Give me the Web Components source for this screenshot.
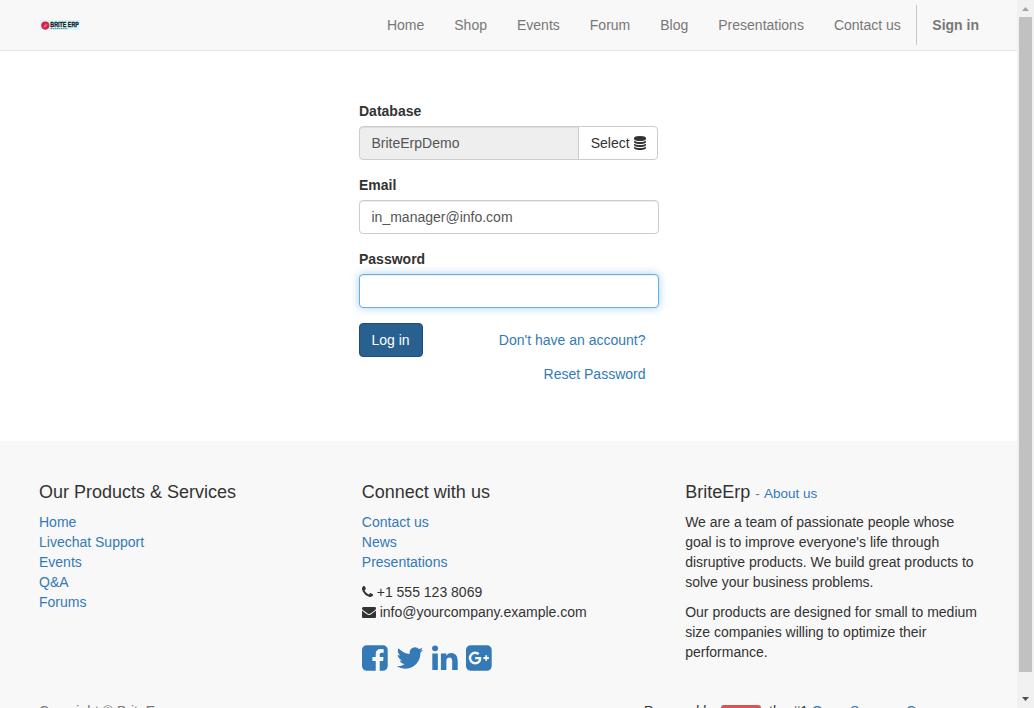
<!DOCTYPE html>
<html lang="en">
<head>
<meta charset="utf-8">
<title>Login | BriteErp</title>
<style>
html,body{margin:0;height:100%;overflow:hidden;background:#fff}
body{font:14px/20px "Liberation Sans",Arial,sans-serif;color:#333}
</style>
</head>
<body>
<erp-page>
  <erp-navbar slot="header">
    <erp-nav-item>Home</erp-nav-item><erp-nav-item>Shop</erp-nav-item><erp-nav-item>Events</erp-nav-item><erp-nav-item>Forum</erp-nav-item><erp-nav-item>Blog</erp-nav-item><erp-nav-item>Presentations</erp-nav-item><erp-nav-item>Contact us</erp-nav-item><erp-nav-item strong>Sign in</erp-nav-item>
  </erp-navbar>
  <erp-login></erp-login>
  <erp-footer slot="footer"></erp-footer>
</erp-page>
<script>
const define = (name, html) => customElements.define(name, class extends HTMLElement {
  constructor() {
    super();
    const t = document.createElement('template');
    t.innerHTML = html;
    this.attachShadow({mode: 'open'}).append(t.content.cloneNode(true));
  }
});

/* Glyphs on a 1792 grid: [left, advance, path] */
const GLYPHS = {
  facebook: [128,1536,'M1376 128q119 0 203.500 84.500t84.500 203.500v960q0 119-84.500 203.500t-203.500 84.500h-188v-595h199l30-232h-229v-148q0-56 23.500-84t91.500-28l122-1v-207q-63-9-178-9-136 0-217.500 80t-81.500 226v171h-200v232h200v595h-532q-119 0-203.500-84.500t-84.500-203.500v-960q0-119 84.500-203.500t203.500-84.500h960z'],
  twitter: [64,1664,'M1684 408q-67 98-162 167 1 14 1 42 0 130-38 259.500t-115.500 248.500-184.500 210.500-258 146-323 54.500q-271 0-496-145 35 4 78 4 225 0 401-138-105-2-188-64.500t-114-159.500q33 5 61 5 43 0 85-11-112-23-185.500-111.500t-73.500-205.500v-4q68 38 146 41-66-44-105-115t-39-154q0-88 44-163 121 149 294.500 238.500t371.500 99.500q-8-38-8-74 0-134 94.500-228.500t228.500-94.500q140 0 236 102 109-21 205-78-37 115-142 178 93-10 186-50z'],
  linkedin: [128,1536,'M477 625v991h-330v-991h330zm21-306q1 73-50.500 122t-135.500 49h-2q-82 0-132-49t-50-122q0-74 51.500-122.500t134.500-48.500 133 48.500 51 122.500zm1166 729v568h-329v-530q0-105-40.500-164.500t-126.500-59.500q-63 0-105.500 34.500t-63.500 85.500q-11 30-11 81v553h-329q2-399 2-647t-1-296l-1-48h329v144h-2q20-32 41-56t56.500-52 87-43.500 114.500-15.500q171 0 275 113.500t104 332.500z'],
  google: [128,1536,'M1045 905q0-26-6-64h-362v132h217q-3 24-16.500 50t-37.500 53-66.500 44.500-96.500 17.500q-99 0-169-71t-70-171 70-171 169-71q92 0 153 59l104-101q-108-100-257-100-160 0-272 112.500t-112 271.500 112 271.500 272 112.500q165 0 266.500-105t101.500-270zm345 46h109v-110h-109v-110h-110v110h-110v110h110v110h110v-110zm274-535v960q0 119-84.500 203.500t-203.500 84.500h-960q-119 0-203.500-84.500t-84.500-203.500v-960q0-119 84.500-203.500t203.500-84.500h960q119 0 203.500 84.500t84.500 203.500z'],
  phone: [192,1408,'M1600 1240q0 27-10 70.500t-21 68.500q-21 50-122 106-94 51-186 51-27 0-52.500-3.500t-57.500-12.500-47.500-14.500-55.500-20.500-49-18q-98-35-175-83-128-79-264.500-215.500t-215.500-264.500q-48-77-83-175-3-9-18-49t-20.500-55.500-14.500-47.500-12.500-57.500-3.500-52.500q0-92 51-186 56-101 106-122 25-11 68.500-21t70.500-10q14 0 21 3 18 6 53 76 11 19 30 54t35 63.500 31 53.500q3 4 17.500 25t21.500 35.500 7 28.500q0 20-28.500 50t-62 55-62 53-28.500 46q0 9 5 22.500t8.500 20.500 14 24 11.500 19q76 137 174 235t235 174q2 1 19 11.500t24 14 20.500 8.500 22.500 5q18 0 46-28.500t53-62 55-62 50-28.500q14 0 28.500 7t35.500 21.500 25 17.500q25 15 53.500 31t63.500 35 54 30q70 35 76 53 3 7 3 21z'],
  envelope: [0,1792,'M1792 710v794q0 66-47 113t-113 47h-1472q-66 0-113-47t-47-113v-794q44 49 101 87 362 246 497 345 57 42 92.500 65.500t94.500 48 110 24.500h2q51 0 110-24.500t94.500-48 92.500-65.500q170-123 498-345 57-39 100-87zm0-294q0 79-49 151t-122 123q-376 261-468 325-10 7-42.500 30.500t-54 38-52 32.500-57.500 27-50 9h-2q-23 0-50-9t-57.500-27-52-32.500-54-38-42.500-30.500q-91-64-262-182.500t-205-142.500q-62-42-117-115.500t-55-136.500q0-78 41.500-130t118.500-52h1472q65 0 112.500 47t47.500 113z'],
  database: [128,1536,'M896 768q237 0 443-43t325-127v170q0 69-103 128t-280 93.500-385 34.500-385-34.500-280-93.500-103-128v-170q119 84 325 127t443 43zm0 768q237 0 443-43t325-127v170q0 69-103 128t-280 93.500-385 34.500-385-34.500-280-93.500-103-128v-170q119 84 325 127t443 43zm0-384q237 0 443-43t325-127v170q0 69-103 128t-280 93.500-385 34.500-385-34.500-280-93.500-103-128v-170q119 84 325 127t443 43zm0-1152q208 0 385 34.500t280 93.500 103 128v128q0 69-103 128t-280 93.500-385 34.500-385-34.500-280-93.500-103-128v-128q0-69 103-128t280-93.500 385-34.500z']
};
customElements.define('erp-icon', class extends HTMLElement {
  connectedCallback() {
    if (this.shadowRoot) return;
    const [x, w, d] = GLYPHS[this.getAttribute('name')];
    this.attachShadow({mode: 'open'}).innerHTML =
      `<style>:host{display:inline-block;height:1em;width:${w / 1792}em;vertical-align:-2px}svg{display:block;width:100%;height:100%;fill:currentColor;overflow:visible}</style>
       <svg viewBox="${x} 0 ${w} 1792" aria-hidden="true"><path d="${d}"/></svg>`;
  }
});

define('erp-logo', `<style>:host{display:block;width:40px;height:10px}svg{display:block}text{font-family:"Liberation Sans",Arial,sans-serif;font-weight:bold}</style>
<svg width="40" height="10" viewBox="0 0 40 10"><rect width="39.500" height="10" fill="#d8f6f8"/><circle cx="5.300" cy="5.600" r="4.100" fill="#dc1e46"/><path d="M3.800 7.200l2.200-3.100M5 7.400l2-2.800" stroke="#f4a9ba" stroke-width=".7"/>
<text x="10.300" y="7" font-size="6.600" textLength="28.600" lengthAdjust="spacingAndGlyphs" fill="#14242c" stroke="#14242c" stroke-width=".3">BRITE ERP</text>
<path d="M10.500 8.600h17" stroke="#53666c" stroke-width=".8" stroke-dasharray="1.600 .5"/></svg>`);

define('erp-nav-item', `<style>:host{display:block;color:#777}span{display:block;padding:10px 15px;margin:5px 0}:host([strong]) span{font-weight:bold;border-left:1px solid #c8c8c8;padding:10px 14.500px 10px 15.500px}</style><span><slot></slot></span>`);

define('erp-navbar', `<style>:host{display:block;background:#f8f8f8;border-bottom:1px solid #e7e7e7}
.in{box-sizing:border-box;width:970px;height:50px;margin:0 auto;padding-left:16.500px;display:flex;align-items:center;justify-content:space-between}nav{display:flex}</style>
<div class="in"><erp-logo></erp-logo><nav><slot></slot></nav></div>`);

define('erp-field', `<style>:host{display:block;margin-bottom:15px}b{display:block;margin-bottom:5px;padding-left:.5px}
.row{display:flex}.box{flex:1;box-sizing:border-box;height:34px;padding:6px 12px;border:1px solid #ccc;border-radius:4px;background:#fff;color:#555;box-shadow:inset 0 1px 1px rgba(0,0,0,.075)}
:host([readonly]) .box{background:#eee;border-radius:4px 0 0 4px}
:host([focused]) .box{border-color:#66afe9;box-shadow:inset 0 1px 1px rgba(0,0,0,.075),0 0 8px rgba(102,175,233,.6)}
::slotted([slot=addon]){margin-left:-1px}</style>
<b><slot name="label"></slot></b><div class="row"><div class="box" role="textbox"><slot></slot></div><slot name="addon"></slot></div>`);

define('erp-button', `<style>:host{display:block;box-sizing:border-box;height:34px;padding:6px 12px;border:1px solid #ccc;border-radius:4px;background:#fff;white-space:nowrap}
:host([primary]){background:#286090;border-color:#204d74;color:#fff}
:host([link]){background:none;border-color:transparent;color:#337ab7}
:host([slot=addon]){border-radius:0 4px 4px 0;padding-right:11px}</style><slot></slot>`);

define('erp-login', `<style>:host{display:block;box-sizing:border-box;width:300px;height:390px;margin:0 auto;padding-top:50px}
erp-field[readonly]{margin-right:1px}.act{display:flex;justify-content:space-between;align-items:flex-start}.links{display:flex;flex-direction:column;align-items:flex-end}</style>
<erp-field readonly><span slot="label">Database</span>BriteErpDemo<erp-button slot="addon">Select <erp-icon name="database"></erp-icon></erp-button></erp-field>
<erp-field><span slot="label">Email</span>in_manager@info.com</erp-field>
<erp-field focused><span slot="label">Password</span></erp-field>
<div class="act"><erp-button primary>Log in</erp-button><div class="links"><erp-button link>Don't have an account?</erp-button><erp-button link>Reset Password</erp-button></div></div>`);

define('erp-footer-column', `<style>:host{display:block;box-sizing:border-box;padding:0 15px}h4{font-size:18px;font-weight:500;line-height:20px;height:20px;margin:0 0 10px}</style><h4><slot name="title"></slot></h4><slot></slot>`);

define('erp-footer', `<style>:host{display:block;background:#f8f8f8;height:300px}
.in{width:970px;margin:0 auto;padding-top:41px}.cols{display:grid;grid-template-columns:repeat(3,1fr);height:219px}
erp-footer-column:first-child{padding-left:15.500px}
a{color:#337ab7}ul{list-style:none;margin:0 0 10px;padding:0}p{margin:0 0 10px}small{font-size:13.500px;line-height:1;color:#777}small a{margin-left:.6px}
.social{display:flex;gap:8.200px;font-size:30px;color:#337ab7;margin-top:21px}
.bottom{display:flex;justify-content:space-between;padding:0 15px 0 15.500px}.copy{color:#777}.power{width:334.500px;white-space:nowrap}
.badge{display:inline-block;background:#d9534f;color:#fff;font-size:10.500px;font-weight:bold;line-height:10.500px;padding:2.100px 6.300px 3.150px;border-radius:3px;vertical-align:baseline;margin-left:-.6px}</style>
<div class="in"><div class="cols">
<erp-footer-column><span slot="title">Our Products &amp; Services</span><ul><li><a>Home</a></li><li><a>Livechat Support</a></li><li><a>Events</a></li><li><a>Q&amp;A</a></li><li><a>Forums</a></li></ul></erp-footer-column>
<erp-footer-column><span slot="title">Connect with us</span><ul><li><a>Contact us</a></li><li><a>News</a></li><li><a>Presentations</a></li></ul>
<ul><li><erp-icon name="phone"></erp-icon> +1 555 123 8069</li><li><erp-icon name="envelope"></erp-icon> info@yourcompany.example.com</li></ul>
<div class="social"><erp-icon name="facebook"></erp-icon><erp-icon name="twitter"></erp-icon><erp-icon name="linkedin"></erp-icon><erp-icon name="google"></erp-icon></div></erp-footer-column>
<erp-footer-column><span slot="title">BriteErp <small>- <a>About us</a></small></span><p>We are a team of passionate people whose goal is to improve everyone's life through disruptive products. We build great products to solve your business problems.</p><p>Our products are designed for small to medium size companies willing to optimize their performance.</p></erp-footer-column>
</div><div class="bottom"><div class="copy">Copyright © BriteErp</div><div class="power">Powered by <span class="badge">Odoo</span>, the #1 <a>Open Source eCommerce</a></div></div></div>`);

define('erp-scrollbar', `<style>:host{display:flex;flex-direction:column;box-sizing:border-box;width:17px;height:100%;background:#f1f1f1;padding:0 2px}svg{display:block;width:13px;height:17px}.thumb{height:655px;background:#c1c1c1}.gap{flex:1}</style>
<svg><path d="M3 11h7L6.500 7z" fill="#a3a3a3"/></svg><div class="thumb"></div><div class="gap"></div><svg><path d="M3 6h7L6.500 10z" fill="#505050"/></svg>`);

define('erp-page', `<style>:host{display:flex;height:708px;overflow:hidden}main{flex:1;min-width:0;height:708px;overflow:hidden}</style>
<main><slot name="header"></slot><slot></slot><slot name="footer"></slot></main><erp-scrollbar></erp-scrollbar>`);
</script>
</body>
</html>
